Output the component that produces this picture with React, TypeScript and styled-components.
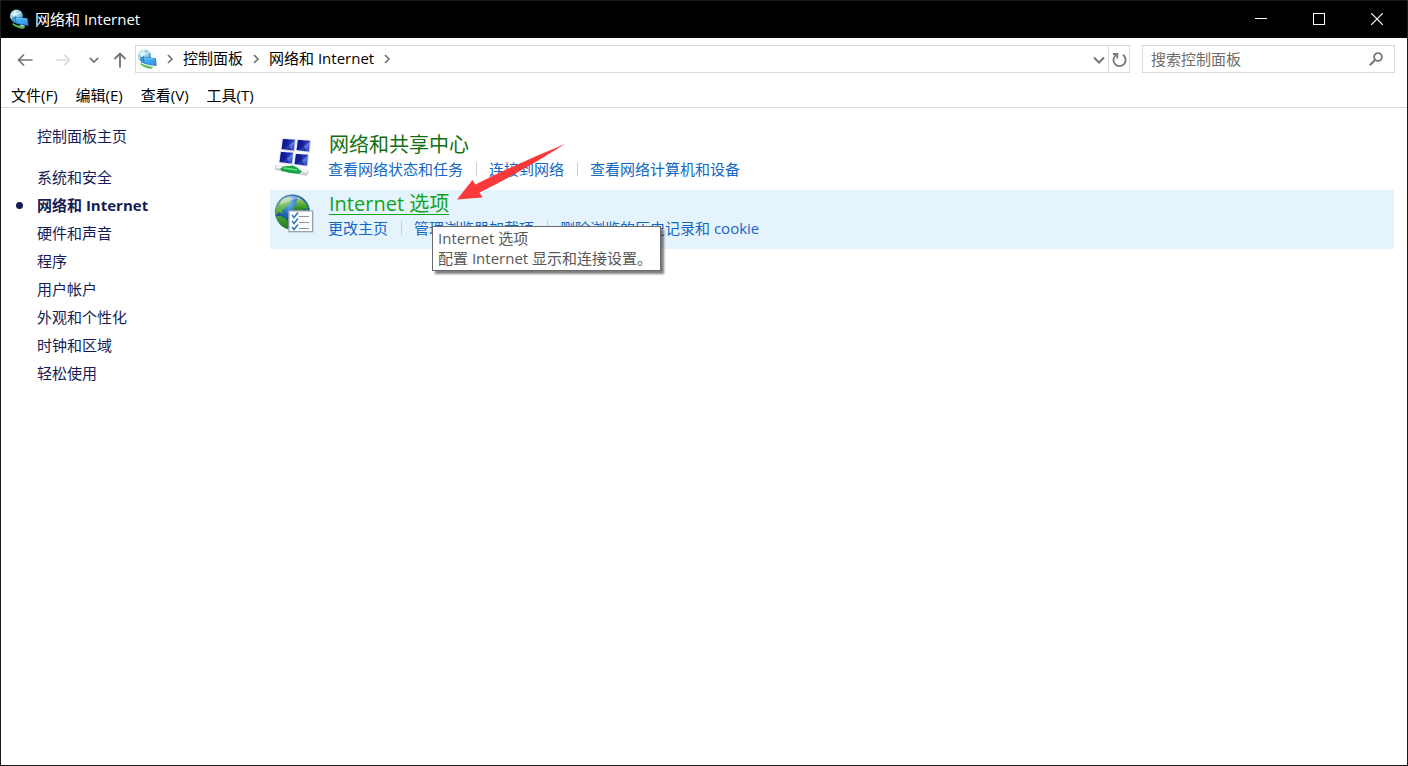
import React from "react";
import styled, { createGlobalStyle } from "styled-components";

const GlobalStyle = createGlobalStyle`
  *, *::before, *::after { box-sizing: border-box; }
  body {
    margin: 0;
    background: #fff;
    font-family: "Open Sans", "Noto Sans CJK SC", sans-serif;
    font-size: 15px;
    font-weight: 400;
    line-height: 20px;
    color: #000;
  }
  button, input { font: inherit; color: inherit; }
  ul { list-style: none; margin: 0; padding: 0; }
`;

const Window = styled.div`
  display: flex;
  flex-direction: column;
  min-height: 100vh;
  border: 1px solid #1a1a1a;
  background: #fff;
`;

const TitleBar = styled.header`
  display: flex;
  align-items: center;
  height: 37px;
  padding-left: 8px;
  gap: 6px;
  background: #000;
  color: #fff;
`;

const WindowTitle = styled.h1`
  flex: 1;
  margin: 0;
  padding-bottom: 2px;
  font-size: 15px;
  font-weight: 400;
`;

const CaptionButton = styled.button`
  display: grid;
  place-items: center;
  width: 58px;
  height: 37px;
  margin: 0;
  padding: 0 0 2px;
  border: 0;
  background: transparent;
  color: #fff;
`;

const CaptionButtons = styled.div`
  display: flex;
  padding-right: 1px;
`;

const Toolbar = styled.div`
  display: flex;
  align-items: center;
  padding: 7px 12px 0 7px;
`;

const NavButton = styled.button<{ $width: number; $faded?: boolean }>`
  display: grid;
  place-items: center;
  width: ${(p) => p.$width}px;
  height: 28px;
  padding: 2px 0 0;
  border: 0;
  background: transparent;
  color: ${(p) => (p.$faded ? "#dcdcdc" : "#757575")};
`;

const AddressBar = styled.div`
  display: flex;
  align-items: center;
  flex: 1;
  height: 28px;
  padding-left: 1px;
  border: 1px solid #d9d9d9;
`;

const Crumbs = styled.nav`
  display: flex;
  align-items: center;
  flex: 1;
`;

const Crumb = styled.button`
  padding: 0 0 2px;
  border: 0;
  background: transparent;
`;

const CrumbArrow = styled.span`
  display: grid;
  place-items: center;
  width: 26px;
  color: #757575;
`;

const AddressButton = styled.button<{ $divided?: boolean }>`
  display: grid;
  place-items: center;
  width: ${(p) => (p.$divided ? 21 : 18)}px;
  height: 26px;
  padding: 2px 0 0;
  border: 0;
  border-left: ${(p) => (p.$divided ? "1px solid #d9d9d9" : "0")};
  background: transparent;
  color: #757575;
`;

const SearchBox = styled.form`
  display: flex;
  align-items: center;
  width: 253px;
  height: 28px;
  margin-left: 12px;
  padding: 0 11px 0 8px;
  border: 1px solid #d9d9d9;
`;

const SearchInput = styled.input`
  flex: 1;
  min-width: 0;
  height: 26px;
  padding: 0;
  border: 0;
  outline: 0;
  background: transparent;
  &::placeholder { color: #6d6d6d; opacity: 1; }
`;

const SearchButton = styled.button`
  display: grid;
  place-items: center;
  padding: 0;
  border: 0;
  background: transparent;
  color: #757575;
`;

const MenuBar = styled.nav`
  display: flex;
  padding: 11px 1px 1px;
  border-bottom: 1px solid #d9d9d9;
`;

const MenuItem = styled.button`
  padding: 0 9px;
  border: 0;
  background: transparent;
  line-height: 22px;
`;

const Content = styled.div`
  display: flex;
  flex: 1;
  padding-right: 13px;
`;

const Sidebar = styled.nav`
  width: 269px;
  padding: 14px 0 0 14px;
  color: #151c55;
`;

const SideLink = styled.a<{ $active?: boolean }>`
  display: flex;
  align-items: center;
  height: 28px;
  color: inherit;
  text-decoration: none;
  font-weight: ${(p) => (p.$active ? 700 : 400)};
  &::before {
    content: "";
    width: 7px;
    height: 7px;
    margin: 0 14px 0 1px;
    border-radius: 50%;
    background: ${(p) => (p.$active ? "#151c55" : "transparent")};
  }
`;

const SideList = styled.ul`
  margin-top: 13px;
`;

const Categories = styled.main`
  flex: 1;
  padding-top: 23px;
`;

const Category = styled.section<{ $hovered?: boolean }>`
  position: relative;
  display: flex;
  gap: 14px;
  height: 59px;
  padding: 1px 4px 0;
  background: ${(p) => (p.$hovered ? "#e5f3fd" : "transparent")};
`;

const CategoryIcon = styled.div`
  width: 40px;
  padding-top: 3px;
`;

const CategoryTitle = styled.h2`
  margin: 0;
  padding-left: 1px;
  font-size: 20px;
  font-weight: 400;
  line-height: 26px;
`;

const TitleLink = styled.a<{ $hovered?: boolean }>`
  color: ${(p) => (p.$hovered ? "#0ca51c" : "#107010")};
  text-decoration: ${(p) => (p.$hovered ? "underline" : "none")};
  text-decoration-thickness: 1px;
  text-underline-offset: 3px;
`;

const TaskList = styled.ul`
  display: flex;
  align-items: center;
  height: 22px;
`;

const Task = styled.li`
  display: flex;
  align-items: center;
  & + &::before {
    content: "";
    width: 1px;
    height: 14px;
    margin: 0 12px 0 13px;
    background: #c8ccd4;
  }
`;

const TaskLink = styled.a`
  color: #1467c4;
  text-decoration: none;
`;

const Tooltip = styled.div`
  position: absolute;
  left: 162px;
  top: 36px;
  padding: 1px 8px 2px 5px;
  border: 1px solid #6a6a6a;
  background: #fff;
  box-shadow: 3px 3px 2px rgba(0, 0, 0, 0.5);
  color: #575757;
  white-space: nowrap;
`;

const Pointer = styled.svg`
  position: absolute;
  left: 186px;
  top: -47px;
  z-index: 1;
`;

const NetworkIcon = () => (
  <svg width="20" height="21" viewBox="0 0 20 21" aria-hidden="true">
    <defs>
      <radialGradient id="net-globe" cx="0.35" cy="0.3" r="0.8">
        <stop offset="0" stopColor="#d9f3fb" />
        <stop offset="0.6" stopColor="#7fbfdb" />
        <stop offset="1" stopColor="#2e79aa" />
      </radialGradient>
      <linearGradient id="net-screen" x1="0" y1="0" x2="1" y2="1">
        <stop offset="0" stopColor="#58bdf8" />
        <stop offset="1" stopColor="#2b8de4" />
      </linearGradient>
    </defs>
    <circle cx="7.5" cy="7" r="6.5" fill="url(#net-globe)" />
    <path d="M2.5 4.5Q7 7 12 3M1.5 8Q4 10 7 10M7 1Q4 5 5 12" fill="none" stroke="#eefaff" strokeWidth="0.9" />
    <path d="M3.5 14Q8 17 14 17.5L16 18.5L14.5 19.8Q8 19.5 3.5 15.5Z" fill="#5bbd55" />
    <path d="M3.5 8.5L7 7.8L7.5 13.8L4.5 13.5Z" fill="#3fa3df" stroke="#1d6ba0" strokeWidth="0.6" />
    <path d="M6 8.2L18.5 9.6L19.2 16.6L7.4 14.6Z" fill="url(#net-screen)" stroke="#1f6ea8" strokeWidth="0.8" />
    <path d="M7 9L17.8 10.2" stroke="#8fd6fb" strokeWidth="0.6" />
    <path d="M11 15.6L15.5 16.4L15.8 18L11.6 17.3Z" fill="#c3d6e0" />
  </svg>
);

const screens: [number, number][] = [[8, 3], [23, 4], [6, 16], [21, 18]];

const SharingIcon = () => (
  <svg width="40" height="42" viewBox="0 0 40 42" aria-hidden="true">
    <defs>
      <linearGradient id="screen-blue" x1="0" y1="0" x2="1" y2="1">
        <stop offset="0" stopColor="#0c1796" />
        <stop offset="0.5" stopColor="#2634b4" />
        <stop offset="0.6" stopColor="#5f7ce2" />
        <stop offset="1" stopColor="#2233b4" />
      </linearGradient>
    </defs>
    {screens.map(([x, y]) => (
      <g key={`${x}-${y}`} transform={`translate(${x} ${y})`}>
        <path d="M0 0L14 1L13 14L-1.5 12Z" fill="#dfe3f0" />
        <path d="M1 1L13 1.8L12 12.6L-0.4 11Z" fill="url(#screen-blue)" />
        <path d="M1 1L6 1.4Q6 7 10 12.4L-0.4 11Z" fill="#0a1288" opacity="0.6" />
      </g>
    ))}
    <path d="M1 30L11 32L10 37L1 35Z" fill="#ccd3d6" />
    <path d="M25 34L35 36L33 41L23 39Z" fill="#ccd3d6" />
    <path d="M2 31.5L8 33M27 35.5L33 37" stroke="#fff" strokeWidth="1.6" />
    <path d="M6 34L9 31.5L19 30.5L24 33L25 35L28 36L25 39L16 38L8 36Z" fill="#18a447" />
    <path d="M10 33L23 35" stroke="#6ae58a" strokeWidth="1.6" />
  </svg>
);

const InternetIcon = () => (
  <svg width="40" height="42" viewBox="0 0 40 42" aria-hidden="true">
    <defs>
      <radialGradient id="globe-blue" cx="0.4" cy="0.25" r="0.8">
        <stop offset="0" stopColor="#6db9ea" />
        <stop offset="0.4" stopColor="#2167b8" />
        <stop offset="1" stopColor="#0a2563" />
      </radialGradient>
      <linearGradient id="land-green" x1="0" y1="0" x2="0" y2="1">
        <stop offset="0" stopColor="#a9cf98" />
        <stop offset="0.5" stopColor="#52ad2e" />
        <stop offset="1" stopColor="#1f7427" />
      </linearGradient>
    </defs>
    <circle cx="18.5" cy="18" r="17.2" fill="url(#globe-blue)" stroke="#4f86a8" strokeWidth="0.8" />
    <path d="M4 10Q8 4 14 3L19 4L16 6L17 9L13 11L12 14L8 16L9 20L5 18L2.5 21Q1 15 4 10ZM3 22L7 22L12 25L14 28V35Q6 33 3 25Z" fill="url(#land-green)" />
    <path d="M24 3.5Q31 6 34.5 14L33 17L30 14L27 18L23 16L19 17L20 12L23 11L22 8Z" fill="url(#land-green)" />
    <path d="M7 6.5Q15 -1 27 4Q20 5 14 8Q9 10 6 11Z" fill="#fff" opacity="0.4" />
    <rect x="14.5" y="16.5" width="25" height="22" fill="#b2bcc5" />
    <rect x="15" y="17" width="23.5" height="20.5" fill="#fbfcfd" stroke="#98a3ae" />
    <path d="M18 21L20 23.5L24 18.5M18 27L20 29.5L24 24.5M18 33L20 35.5L24 30.5" fill="none" stroke="#2a76c4" strokeWidth="1.5" />
    <path d="M25 22.5H35M25 28.5H35M25 34.5H35" stroke="#8d959d" />
  </svg>
);

const BackIcon = () => (
  <svg width="16" height="14" viewBox="0 0 16 14" fill="none" stroke="currentColor" strokeWidth="1.7" aria-hidden="true">
    <path d="M15.5 7H1.5M7 1.5L1.5 7L7 12.5" />
  </svg>
);

const ForwardIcon = () => (
  <svg width="16" height="14" viewBox="0 0 16 14" fill="none" stroke="currentColor" strokeWidth="1.7" aria-hidden="true">
    <path d="M0.5 7H14.5M9 1.5L14.5 7L9 12.5" />
  </svg>
);

const UpIcon = () => (
  <svg width="14" height="16" viewBox="0 0 14 16" fill="none" stroke="currentColor" strokeWidth="1.9" aria-hidden="true">
    <path d="M7 15.5V1.8M1.5 7L7 1.5L12.5 7" />
  </svg>
);

const DownIcon = ({ size = 10 }: { size?: number }) => (
  <svg width={size} height={size} viewBox="0 0 12 12" fill="none" stroke="currentColor" strokeWidth="2" aria-hidden="true">
    <path d="M1 3.5L6 8.5L11 3.5" />
  </svg>
);

const RightIcon = () => (
  <svg width="8" height="10" viewBox="0 0 8 10" fill="none" stroke="currentColor" strokeWidth="1.7" aria-hidden="true">
    <path d="M2 1L6 5L2 9" />
  </svg>
);

const RefreshIcon = () => (
  <svg width="16" height="16" viewBox="0 0 16 16" fill="none" stroke="currentColor" strokeWidth="1.8" aria-hidden="true">
    <path d="M11.8 2.8A6.1 6.1 0 1 1 5 3" />
    <path d="M2 2H6.3V6.6" />
  </svg>
);

const SearchIcon = () => (
  <svg width="14" height="14" viewBox="0 0 14 14" fill="none" stroke="currentColor" aria-hidden="true">
    <circle cx="9" cy="5" r="3.9" strokeWidth="1.8" />
    <path d="M6 8L0.8 13.2" strokeWidth="2" />
  </svg>
);

const sideItems = ["系统和安全", "网络和 Internet", "硬件和声音", "程序", "用户帐户", "外观和个性化", "时钟和区域", "轻松使用"];
const menus = ["文件(F)", "编辑(E)", "查看(V)", "工具(T)"];

const Tasks = ({ items }: { items: string[] }) => (
  <TaskList>
    {items.map((item) => (
      <Task key={item}><TaskLink href="#">{item}</TaskLink></Task>
    ))}
  </TaskList>
);

export default function App() {
  return (
    <>
      <GlobalStyle />
      <Window>
        <TitleBar>
          <NetworkIcon />
          <WindowTitle>网络和 Internet</WindowTitle>
          <CaptionButtons>
            <CaptionButton aria-label="最小化">
              <svg width="12" height="12" viewBox="0 0 12 12"><path d="M0 5.5H12" stroke="currentColor" /></svg>
            </CaptionButton>
            <CaptionButton aria-label="最大化">
              <svg width="12" height="12" viewBox="0 0 12 12"><rect x="0.5" y="0.5" width="11" height="11" fill="none" stroke="currentColor" /></svg>
            </CaptionButton>
            <CaptionButton aria-label="关闭">
              <svg width="12" height="12" viewBox="0 0 12 12"><path d="M0 0L12 12M12 0L0 12" stroke="currentColor" strokeWidth="1.2" /></svg>
            </CaptionButton>
          </CaptionButtons>
        </TitleBar>
        <Toolbar>
          <NavButton $width={34} aria-label="后退"><BackIcon /></NavButton>
          <NavButton $width={42} $faded aria-label="前进"><ForwardIcon /></NavButton>
          <NavButton $width={20} aria-label="最近的位置"><DownIcon /></NavButton>
          <NavButton $width={31} aria-label="向上"><UpIcon /></NavButton>
          <AddressBar>
            <NetworkIcon />
            <Crumbs aria-label="地址">
              <CrumbArrow><RightIcon /></CrumbArrow>
              <Crumb>控制面板</Crumb>
              <CrumbArrow><RightIcon /></CrumbArrow>
              <Crumb>网络和 Internet</Crumb>
              <CrumbArrow><RightIcon /></CrumbArrow>
            </Crumbs>
            <AddressButton aria-label="以前的位置"><DownIcon size={12} /></AddressButton>
            <AddressButton $divided aria-label="刷新"><RefreshIcon /></AddressButton>
          </AddressBar>
          <SearchBox role="search">
            <SearchInput type="text" aria-label="搜索控制面板" placeholder="搜索控制面板" />
            <SearchButton type="button" aria-label="搜索"><SearchIcon /></SearchButton>
          </SearchBox>
        </Toolbar>
        <MenuBar aria-label="菜单">
          {menus.map((menu) => <MenuItem key={menu}>{menu}</MenuItem>)}
        </MenuBar>
        <Content>
          <Sidebar aria-label="控制面板">
            <SideLink href="#">控制面板主页</SideLink>
            <SideList>
              {sideItems.map((item, index) => (
                <li key={item}><SideLink href="#" $active={index === 1}>{item}</SideLink></li>
              ))}
            </SideList>
          </Sidebar>
          <Categories>
            <Category>
              <CategoryIcon><SharingIcon /></CategoryIcon>
              <div>
                <CategoryTitle><TitleLink href="#">网络和共享中心</TitleLink></CategoryTitle>
                <Tasks items={["查看网络状态和任务", "连接到网络", "查看网络计算机和设备"]} />
              </div>
            </Category>
            <Category $hovered>
              <CategoryIcon><InternetIcon /></CategoryIcon>
              <div>
                <CategoryTitle><TitleLink href="#" $hovered aria-describedby="internet-tip">Internet 选项</TitleLink></CategoryTitle>
                <Tasks items={["更改主页", "管理浏览器加载项", "删除浏览的历史记录和 cookie"]} />
              </div>
              <Tooltip role="tooltip" id="internet-tip">
                <div>Internet 选项</div>
                <div>配置 Internet 显示和连接设置。</div>
              </Tooltip>
              <Pointer width="112" height="60" viewBox="0 0 112 60" aria-hidden="true">
                <path d="M1 56.5L16.5 37L19.5 41.5Q60 21 109 1Q67 28 23.5 49.5L26.5 54.5Z" fill="#fa3a3a" />
              </Pointer>
            </Category>
          </Categories>
        </Content>
      </Window>
    </>
  );
}
